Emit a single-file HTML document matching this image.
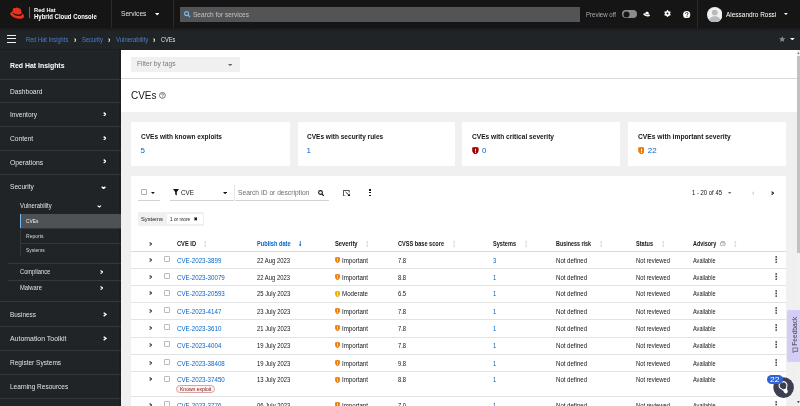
<!DOCTYPE html>
<html><head><meta charset="utf-8"><title>CVEs - Red Hat Insights</title>
<style>
html,body{margin:0;padding:0;width:800px;height:406px;overflow:hidden;background:#f0f0f0;font-family:"Liberation Sans", sans-serif;}
.r{position:absolute;display:block;}
.t{position:absolute;white-space:nowrap;line-height:12px;height:12px;}
</style></head><body><div id="pg" style="position:absolute;left:0;top:0;width:800px;height:406px;overflow:hidden;filter:blur(0.3px)">
<div class="r" style="left:0.00px;top:0.00px;width:800.00px;height:28.00px;background:#151515;"></div>
<svg class="r" style="left:9.00px;top:7.00px" width="16" height="12.2" viewBox="0 -1 16.5 13"><path d="M10.6 6.9c1.1 0 2.6-.2 2.6-1.5 0-.1 0-.2 0-.3l-.6-2.8C12.4 1.6 12.2 1.2 11.1.7 10.2.3 8.4-.4 7.9-.4 7.4-.4 7.2.3 6.7.3 6.1.3 5.7-.1 5.2-.1 4.7-.1 4.4.2 4.1 1.1c0 0-.8 2.2-.9 2.5 0 .1 0 .1 0 .2 0 .8 3.1 3.4 7.4 3.4zM13.5 5.9c.2.7.2.8.2.9 0 1.1-1.3 1.8-2.9 1.8-3.7 0-7-2.2-7-3.6 0-.2 0-.4.1-.6C2.6 4.5 1 4.7 1 6.2 1 8.6 6.8 11.6 11.3 11.6c3.5 0 4.4-1.6 4.4-2.8 0-1-.8-2.1-2.2-2.9z" fill="#e8321e"/></svg>
<div class="r" style="left:29.00px;top:7.10px;width:0.60px;height:11.40px;background:#6a6e73;"></div>
<div class="t" style="left:33.70px;top:4.30px;font-size:5.6px;color:#fff;font-weight:bold;transform:scaleX(1.0217);transform-origin:0 50%;">Red Hat</div>
<div class="t" style="left:33.70px;top:10.90px;font-size:6.6px;color:#fff;font-weight:bold;transform:scaleX(0.9063);transform-origin:0 50%;">Hybrid Cloud Console</div>
<div class="r" style="left:110.80px;top:0.00px;width:0.80px;height:28.00px;background:#2a2a2a;"></div>
<div class="t" style="left:121.30px;top:8.30px;font-size:7.2px;color:#e0e0e0;transform:scaleX(0.9215);transform-origin:0 50%;">Services</div>
<svg class="r" style="left:155.00px;top:13.00px" width="4.4" height="2.6" viewBox="0 0 4.4 2.6"><polygon points="0,0 4.4,0 2.2,2.6" fill="#fff"/></svg>
<div class="r" style="left:173.10px;top:0.00px;width:0.80px;height:28.00px;background:#2a2a2a;"></div>
<div class="r" style="left:180.00px;top:6.80px;width:399.80px;height:15.10px;background:#535456;"></div>
<svg class="r" style="left:184.00px;top:11.00px" width="6.5" height="6.5" viewBox="0 0 6.5 6.5"><circle cx="2.6" cy="2.6" r="2" fill="none" stroke="#73bcf7" stroke-width="1.1"/><line x1="4.1" y1="4.1" x2="6" y2="6" stroke="#73bcf7" stroke-width="1.3"/></svg>
<div class="t" style="left:193.20px;top:8.80px;font-size:7.0px;color:#c3c5c7;transform:scaleX(0.9346);transform-origin:0 50%;">Search for services</div>
<div class="t" style="left:585.90px;top:8.60px;font-size:6.8px;color:#a8abae;transform:scaleX(0.8955);transform-origin:0 50%;">Preview off</div>
<div class="r" style="left:622.00px;top:9.80px;width:15.00px;height:8.40px;background:#8a8d90;border-radius:5px"></div>
<svg class="r" style="left:622.80px;top:10.60px" width="7" height="7" viewBox="0 0 7 7"><circle cx="3.5" cy="3.5" r="3" fill="#151515"/></svg>
<svg class="r" style="left:643.20px;top:10.80px" width="7.6" height="6" viewBox="0 0 7.6 6"><g transform="rotate(12 3.8 3)"><path d="M1.9 3.4 C2.0 1.2 2.9 0.6 3.9 0.6 C4.9 0.6 5.7 1.2 5.9 3.4 Z" fill="#fff"/><ellipse cx="3.8" cy="3.9" rx="3.5" ry="1.3" fill="#fff"/><path d="M1.9 3.2 Q3.9 4.0 5.9 3.2" stroke="#151515" stroke-width="0.5" fill="none"/></g></svg>
<svg class="r" style="left:663.50px;top:10.40px" width="7" height="7" viewBox="0 0 7 7"><g fill="#fff"><rect x="2.8" y="0.1" width="1.4" height="6.8" transform="rotate(0 3.5 3.5)"/><rect x="2.8" y="0.1" width="1.4" height="6.8" transform="rotate(60 3.5 3.5)"/><rect x="2.8" y="0.1" width="1.4" height="6.8" transform="rotate(120 3.5 3.5)"/></g><circle cx="3.5" cy="3.5" r="2.6" fill="#fff"/><circle cx="3.5" cy="3.5" r="1.0" fill="#151515"/></svg>
<svg class="r" style="left:683.30px;top:10.60px" width="7.4" height="7.4" viewBox="0 0 7.4 7.4"><circle cx="3.7" cy="3.7" r="3.6" fill="#fff"/><path d="M2.4 2.9 C2.4 1.9 3.0 1.5 3.7 1.5 C4.5 1.5 5.0 2.0 5.0 2.7 C5.0 3.5 4.0 3.7 4.0 4.5" fill="none" stroke="#151515" stroke-width="0.9"/><rect x="3.55" y="5.2" width="0.9" height="0.9" fill="#151515"/></svg>
<div class="r" style="left:697.20px;top:0.00px;width:0.80px;height:28.00px;background:#2a2a2a;"></div>
<svg class="r" style="left:706.80px;top:6.80px" width="15.5" height="15.5" viewBox="0 0 15.5 15.5"><defs><clipPath id="av"><circle cx="7.75" cy="7.75" r="7.75"/></clipPath></defs><circle cx="7.75" cy="7.75" r="7.75" fill="#f0f0f0"/><g clip-path="url(#av)"><circle cx="7.75" cy="5.6" r="2.9" fill="#b8bbbe"/><ellipse cx="7.75" cy="13.8" rx="5.6" ry="4.6" fill="#b8bbbe"/></g></svg>
<div class="t" style="left:725.60px;top:8.50px;font-size:7.2px;color:#fff;transform:scaleX(0.8992);transform-origin:0 50%;">Alessandro Rossi</div>
<svg class="r" style="left:784.20px;top:13.10px" width="3.8" height="2.1" viewBox="0 0 3.8 2.1"><polygon points="0,0 3.8,0 1.9,2.1" fill="#fff"/></svg>
<div class="r" style="left:0.00px;top:28.00px;width:800.00px;height:21.50px;background:#212427;"></div>
<div class="r" style="left:0.00px;top:28.00px;width:800.00px;height:3.50px;background:linear-gradient(#18191b,#212427);"></div>
<div class="r" style="left:7.00px;top:34.80px;width:9.00px;height:1.40px;background:#f0f0f0;"></div>
<div class="r" style="left:7.00px;top:38.10px;width:9.00px;height:1.40px;background:#f0f0f0;"></div>
<div class="r" style="left:7.00px;top:41.50px;width:9.00px;height:1.40px;background:#f0f0f0;"></div>
<div class="t" style="left:26.30px;top:33.90px;font-size:6.5px;color:#4a7fc8;transform:scaleX(0.8791);transform-origin:0 50%;">Red Hat Insights</div>
<svg class="r" style="left:73.70px;top:37.50px" width="2.8" height="4.2" viewBox="0 0 2.8 4.2"><polyline points="0.55,0.55 2.14,2.10 0.55,3.65" fill="none" stroke="#f0f0f0" stroke-width="1.1"/></svg>
<div class="t" style="left:81.80px;top:33.90px;font-size:6.5px;color:#4a7fc8;transform:scaleX(0.8879);transform-origin:0 50%;">Security</div>
<svg class="r" style="left:107.70px;top:37.50px" width="2.8" height="4.2" viewBox="0 0 2.8 4.2"><polyline points="0.55,0.55 2.14,2.10 0.55,3.65" fill="none" stroke="#f0f0f0" stroke-width="1.1"/></svg>
<div class="t" style="left:115.50px;top:33.90px;font-size:6.5px;color:#4a7fc8;transform:scaleX(0.9183);transform-origin:0 50%;">Vulnerability</div>
<svg class="r" style="left:152.50px;top:37.50px" width="2.8" height="4.2" viewBox="0 0 2.8 4.2"><polyline points="0.55,0.55 2.14,2.10 0.55,3.65" fill="none" stroke="#f0f0f0" stroke-width="1.1"/></svg>
<div class="t" style="left:160.50px;top:33.90px;font-size:6.5px;color:#e0e0e0;transform:scaleX(0.8662);transform-origin:0 50%;">CVEs</div>
<svg class="r" style="left:779.30px;top:35.60px" width="6.5" height="6" viewBox="0 0 6.5 6"><polygon points="3.25,0 4.1,2.2 6.5,2.3 4.6,3.8 5.3,6 3.25,4.7 1.2,6 1.9,3.8 0,2.3 2.4,2.2" fill="#8a8d90"/></svg>
<svg class="r" style="left:790.40px;top:37.70px" width="4.7" height="2.4" viewBox="0 0 4.7 2.4"><polygon points="0,0 4.7,0 2.35,2.4" fill="#fff"/></svg>
<div class="r" style="left:0.00px;top:49.50px;width:121.00px;height:356.50px;background:#212427;"></div>
<div class="r" style="left:118.50px;top:49.50px;width:2.50px;height:356.50px;background:#1b1d21;"></div>
<div class="r" style="left:0.00px;top:48.80px;width:121.00px;height:1.00px;background:#1a1c1f;"></div>
<div class="t" style="left:9.60px;top:59.90px;font-size:7.9px;color:#fff;font-weight:bold;transform:scaleX(0.8753);transform-origin:0 50%;">Red Hat Insights</div>
<div class="r" style="left:0.00px;top:78.60px;width:121.00px;height:0.80px;background:#34373b;"></div>
<div class="t" style="left:9.60px;top:85.60px;font-size:7.6px;color:#e0e0e0;transform:scaleX(0.8720);transform-origin:0 50%;">Dashboard</div>
<div class="r" style="left:0.00px;top:101.90px;width:121.00px;height:0.80px;background:#34373b;"></div>
<div class="t" style="left:9.60px;top:109.40px;font-size:7.6px;color:#e0e0e0;transform:scaleX(0.8672);transform-origin:0 50%;">Inventory</div>
<svg class="r" style="left:102.60px;top:111.90px" width="3.8" height="4.6" viewBox="0 0 3.8 4.6"><polyline points="0.65,0.65 3.02,2.30 0.65,3.95" fill="none" stroke="#fff" stroke-width="1.3"/></svg>
<div class="r" style="left:0.00px;top:125.50px;width:121.00px;height:0.80px;background:#34373b;"></div>
<div class="t" style="left:9.60px;top:133.20px;font-size:7.6px;color:#e0e0e0;transform:scaleX(0.8719);transform-origin:0 50%;">Content</div>
<svg class="r" style="left:102.60px;top:135.70px" width="3.8" height="4.6" viewBox="0 0 3.8 4.6"><polyline points="0.65,0.65 3.02,2.30 0.65,3.95" fill="none" stroke="#fff" stroke-width="1.3"/></svg>
<div class="r" style="left:0.00px;top:149.50px;width:121.00px;height:0.80px;background:#34373b;"></div>
<div class="t" style="left:9.60px;top:156.90px;font-size:7.6px;color:#e0e0e0;transform:scaleX(0.8935);transform-origin:0 50%;">Operations</div>
<svg class="r" style="left:102.60px;top:159.40px" width="3.8" height="4.6" viewBox="0 0 3.8 4.6"><polyline points="0.65,0.65 3.02,2.30 0.65,3.95" fill="none" stroke="#fff" stroke-width="1.3"/></svg>
<div class="r" style="left:0.00px;top:173.50px;width:121.00px;height:0.80px;background:#34373b;"></div>
<div class="t" style="left:9.60px;top:181.10px;font-size:7.6px;color:#e0e0e0;transform:scaleX(0.8719);transform-origin:0 50%;">Security</div>
<svg class="r" style="left:101.00px;top:185.60px" width="5.2" height="3.4" viewBox="0 0 5.2 3.4"><polyline points="0.75,0.75 2.60,2.50 4.45,0.75" fill="none" stroke="#fff" stroke-width="1.5"/></svg>
<div class="t" style="left:19.60px;top:199.90px;font-size:6.7px;color:#e0e0e0;transform:scaleX(0.8732);transform-origin:0 50%;">Vulnerability</div>
<svg class="r" style="left:97.30px;top:205.30px" width="4.6" height="2.8" viewBox="0 0 4.6 2.8"><polyline points="0.60,0.60 2.30,2.08 4.00,0.60" fill="none" stroke="#fff" stroke-width="1.2"/></svg>
<div class="r" style="left:19.80px;top:213.80px;width:101.20px;height:14.60px;background:#4f5255;"></div>
<div class="r" style="left:19.80px;top:213.80px;width:1.60px;height:14.60px;background:#73bcf7;"></div>
<div class="r" style="left:19.80px;top:228.40px;width:0.80px;height:27.60px;background:#34373b;"></div>
<div class="t" style="left:26.30px;top:215.30px;font-size:5.6px;color:#f0f0f0;transform:scaleX(0.8594);transform-origin:0 50%;">CVEs</div>
<div class="r" style="left:20.60px;top:228.10px;width:100.40px;height:0.60px;background:#34373b;"></div>
<div class="t" style="left:26.30px;top:230.20px;font-size:5.6px;color:#d8d8d8;transform:scaleX(0.8982);transform-origin:0 50%;">Reports</div>
<div class="r" style="left:20.60px;top:243.00px;width:100.40px;height:0.60px;background:#34373b;"></div>
<div class="t" style="left:26.30px;top:244.40px;font-size:5.6px;color:#d8d8d8;transform:scaleX(0.8717);transform-origin:0 50%;">Systems</div>
<div class="r" style="left:8.00px;top:263.30px;width:113.00px;height:0.70px;background:#34373b;"></div>
<div class="t" style="left:19.60px;top:266.20px;font-size:6.7px;color:#e0e0e0;transform:scaleX(0.8581);transform-origin:0 50%;">Compliance</div>
<svg class="r" style="left:99.80px;top:269.60px" width="3.4" height="4.2" viewBox="0 0 3.4 4.2"><polyline points="0.60,0.60 2.68,2.10 0.60,3.60" fill="none" stroke="#fff" stroke-width="1.2"/></svg>
<div class="r" style="left:8.00px;top:279.60px;width:113.00px;height:0.70px;background:#34373b;"></div>
<div class="t" style="left:19.60px;top:282.40px;font-size:6.7px;color:#e0e0e0;transform:scaleX(0.8656);transform-origin:0 50%;">Malware</div>
<svg class="r" style="left:99.80px;top:285.80px" width="3.4" height="4.2" viewBox="0 0 3.4 4.2"><polyline points="0.60,0.60 2.68,2.10 0.60,3.60" fill="none" stroke="#fff" stroke-width="1.2"/></svg>
<div class="r" style="left:0.00px;top:301.40px;width:121.00px;height:0.80px;background:#34373b;"></div>
<div class="t" style="left:9.60px;top:308.90px;font-size:7.6px;color:#e0e0e0;transform:scaleX(0.8434);transform-origin:0 50%;">Business</div>
<svg class="r" style="left:102.80px;top:312.00px" width="3.8" height="4.8" viewBox="0 0 3.8 4.8"><polyline points="0.65,0.65 3.02,2.40 0.65,4.15" fill="none" stroke="#fff" stroke-width="1.3"/></svg>
<div class="r" style="left:0.00px;top:325.90px;width:121.00px;height:0.80px;background:#34373b;"></div>
<div class="t" style="left:9.60px;top:333.10px;font-size:7.6px;color:#e0e0e0;transform:scaleX(0.9124);transform-origin:0 50%;">Automation Toolkit</div>
<svg class="r" style="left:102.80px;top:336.20px" width="3.8" height="4.8" viewBox="0 0 3.8 4.8"><polyline points="0.65,0.65 3.02,2.40 0.65,4.15" fill="none" stroke="#fff" stroke-width="1.3"/></svg>
<div class="r" style="left:0.00px;top:349.90px;width:121.00px;height:0.80px;background:#34373b;"></div>
<div class="t" style="left:9.60px;top:357.10px;font-size:7.6px;color:#e0e0e0;transform:scaleX(0.8586);transform-origin:0 50%;">Register Systems</div>
<div class="r" style="left:0.00px;top:373.90px;width:121.00px;height:0.80px;background:#34373b;"></div>
<div class="t" style="left:9.60px;top:381.10px;font-size:7.6px;color:#e0e0e0;transform:scaleX(0.8563);transform-origin:0 50%;">Learning Resources</div>
<div class="r" style="left:0.00px;top:398.00px;width:121.00px;height:0.80px;background:#34373b;"></div>
<div class="r" style="left:121.00px;top:49.50px;width:676.00px;height:62.50px;background:#ffffff;"></div>
<div class="r" style="left:121.00px;top:112.00px;width:676.00px;height:294.00px;background:#f0f0f0;"></div>
<div class="r" style="left:131.00px;top:56.70px;width:109.00px;height:14.90px;background:#f0f0f0;"></div>
<div class="t" style="left:137.40px;top:58.20px;font-size:7.3px;color:#777b80;transform:scaleX(0.9215);transform-origin:0 50%;">Filter by tags</div>
<svg class="r" style="left:228.00px;top:63.70px" width="4.2" height="2.3" viewBox="0 0 4.2 2.3"><polygon points="0,0 4.2,0 2.1,2.3" fill="#6a6e73"/></svg>
<div class="r" style="left:121.00px;top:77.90px;width:676.00px;height:0.80px;background:#d9d9d9;"></div>
<div class="t" style="left:130.50px;top:89.20px;font-size:10.6px;color:#151515;transform:scaleX(0.9412);transform-origin:0 50%;">CVEs</div>
<svg class="r" style="left:159.10px;top:92.20px" width="6.8" height="6.8" viewBox="0 0 6.8 6.8"><circle cx="3.4" cy="3.4" r="2.9" fill="none" stroke="#4f5255" stroke-width="0.8"/><path d="M2.4 2.7 C2.4 2.0 2.9 1.7 3.4 1.7 C4.0 1.7 4.4 2.1 4.4 2.6 C4.4 3.3 3.6 3.4 3.6 4.1" fill="none" stroke="#4f5255" stroke-width="0.7"/><rect x="3.25" y="4.55" width="0.7" height="0.7" fill="#4f5255"/></svg>
<div class="r" style="left:130.60px;top:122.20px;width:159.30px;height:43.40px;background:#fff;"></div>
<div class="t" style="left:140.60px;top:130.90px;font-size:7.2px;color:#151515;font-weight:bold;transform:scaleX(0.9095);transform-origin:0 50%;">CVEs with known exploits</div>
<div class="t" style="left:140.60px;top:145.30px;font-size:8.0px;color:#0066cc;">5</div>
<div class="r" style="left:297.70px;top:122.20px;width:157.40px;height:43.40px;background:#fff;"></div>
<div class="t" style="left:306.50px;top:130.90px;font-size:7.2px;color:#151515;font-weight:bold;transform:scaleX(0.9083);transform-origin:0 50%;">CVEs with security rules</div>
<div class="t" style="left:306.50px;top:145.30px;font-size:8.0px;color:#0066cc;">1</div>
<div class="r" style="left:462.00px;top:122.20px;width:158.10px;height:43.40px;background:#fff;"></div>
<div class="t" style="left:472.00px;top:130.90px;font-size:7.2px;color:#151515;font-weight:bold;transform:scaleX(0.9162);transform-origin:0 50%;">CVEs with critical severity</div>
<svg class="r" style="left:471.80px;top:146.60px" width="6.8" height="7.5" viewBox="0 0 6.8 7.5"><path d="M0.2 0.6 L3.4 0 L6.6 0.6 L6.6 3.6 C6.6 5.6 5 6.9 3.4 7.5 C1.8 6.9 0.2 5.6 0.2 3.6 Z" fill="#a30000"/><rect x="3" y="1.7" width="0.9" height="2.8" fill="#fff"/><rect x="3" y="5.1" width="0.9" height="0.9" fill="#fff"/></svg>
<div class="t" style="left:482.00px;top:145.30px;font-size:8.0px;color:#0066cc;">0</div>
<div class="r" style="left:627.80px;top:122.20px;width:158.30px;height:43.40px;background:#fff;"></div>
<div class="t" style="left:637.60px;top:130.90px;font-size:7.2px;color:#151515;font-weight:bold;transform:scaleX(0.9311);transform-origin:0 50%;">CVEs with important severity</div>
<svg class="r" style="left:637.60px;top:146.60px" width="6.8" height="7.5" viewBox="0 0 6.8 7.5"><path d="M0.2 0.6 L3.4 0 L6.6 0.6 L6.6 3.6 C6.6 5.6 5 6.9 3.4 7.5 C1.8 6.9 0.2 5.6 0.2 3.6 Z" fill="#ec7a08"/><rect x="3" y="1.7" width="0.9" height="2.8" fill="#fff"/><rect x="3" y="5.1" width="0.9" height="0.9" fill="#fff"/></svg>
<div class="t" style="left:647.80px;top:145.30px;font-size:8.0px;color:#0066cc;">22</div>
<div class="r" style="left:130.70px;top:176.20px;width:655.40px;height:229.80px;background:#fff;"></div>
<svg class="r" style="left:141.00px;top:189.40px" width="6" height="6" viewBox="0 0 6 6"><rect x="0.4" y="0.4" width="5.2" height="5.2" rx="0.8" fill="#fff" stroke="#8a8d90" stroke-width="0.8"/></svg>
<svg class="r" style="left:151.20px;top:192.00px" width="3.8" height="2.1" viewBox="0 0 3.8 2.1"><polygon points="0,0 3.8,0 1.9,2.1" fill="#151515"/></svg>
<div class="r" style="left:137.70px;top:199.90px;width:22.10px;height:0.70px;background:#d2d2d2;"></div>
<svg class="r" style="left:172.70px;top:189.20px" width="6" height="6.5" viewBox="0 0 6 6.5"><path d="M0 0 H6 L3.8 2.9 V6.5 L2.2 5.6 V2.9 Z" fill="#151515"/></svg>
<div class="t" style="left:181.00px;top:186.70px;font-size:6.9px;color:#151515;transform:scaleX(0.9173);transform-origin:0 50%;">CVE</div>
<svg class="r" style="left:222.50px;top:191.90px" width="4.2" height="2.3" viewBox="0 0 4.2 2.3"><polygon points="0,0 4.2,0 2.1,2.3" fill="#151515"/></svg>
<div class="r" style="left:170.00px;top:199.90px;width:63.80px;height:0.70px;background:#d2d2d2;"></div>
<div class="r" style="left:234.20px;top:185.20px;width:0.60px;height:15.10px;background:#e6e6e6;"></div>
<div class="t" style="left:238.20px;top:186.90px;font-size:7.0px;color:#6a6e73;transform:scaleX(0.9495);transform-origin:0 50%;">Search ID or description</div>
<svg class="r" style="left:318.10px;top:190.00px" width="6.2" height="6.4" viewBox="0 0 6.2 6.4"><circle cx="2.5" cy="2.5" r="1.9" fill="none" stroke="#151515" stroke-width="1.1"/><line x1="3.9" y1="3.9" x2="5.8" y2="5.9" stroke="#151515" stroke-width="1.3"/></svg>
<div class="r" style="left:234.80px;top:199.90px;width:94.20px;height:0.70px;background:#d2d2d2;"></div>
<svg class="r" style="left:342.50px;top:189.60px" width="7.5" height="6.5" viewBox="0 0 7.5 6.5"><path d="M0.4 0.4 H6.2 V2.6 M0.4 0.4 V6.1 H2.6" fill="none" stroke="#151515" stroke-width="0.8"/><line x1="2.6" y1="2.0" x2="6.4" y2="5.6" stroke="#151515" stroke-width="0.9"/><polygon points="6.9,6.1 6.9,3.6 4.4,6.1" fill="#151515"/></svg>
<div class="r" style="left:368.80px;top:189.30px;width:1.80px;height:1.50px;background:#151515;"></div>
<div class="r" style="left:368.80px;top:191.90px;width:1.80px;height:1.50px;background:#151515;"></div>
<div class="r" style="left:368.80px;top:194.50px;width:1.80px;height:1.50px;background:#151515;"></div>
<div class="t" style="left:691.80px;top:186.60px;font-size:6.6px;color:#151515;transform:scaleX(0.8993);transform-origin:0 50%;">1 - 20 of 45</div>
<svg class="r" style="left:728.20px;top:191.90px" width="3.2" height="1.9" viewBox="0 0 3.2 1.9"><polygon points="0,0 3.2,0 1.6,1.9" fill="#6a6e73"/></svg>
<svg class="r" style="left:751.60px;top:190.60px" width="2.8" height="4.2" viewBox="0 0 2.8 4.2"><polyline points="2.25,0.55 0.66,2.10 2.25,3.65" fill="none" stroke="#d2d2d2" stroke-width="1.1"/></svg>
<svg class="r" style="left:771.30px;top:190.60px" width="3.2" height="4.2" viewBox="0 0 3.2 4.2"><polyline points="0.62,0.62 2.45,2.10 0.62,3.58" fill="none" stroke="#151515" stroke-width="1.25"/></svg>
<div class="r" style="left:138.20px;top:212.20px;width:66.00px;height:13.50px;background:#f0f0f0;border-radius:1.5px"></div>
<div class="t" style="left:140.60px;top:213.10px;font-size:6.2px;color:#151515;transform:scaleX(0.9269);transform-origin:0 50%;">Systems</div>
<div class="r" style="left:166.70px;top:214.30px;width:36.00px;height:9.50px;background:#fff;border-radius:1.5px"></div>
<div class="t" style="left:169.60px;top:213.10px;font-size:5.4px;color:#151515;transform:scaleX(0.8710);transform-origin:0 50%;">1 or more</div>
<svg class="r" style="left:193.60px;top:217.20px" width="3.8" height="3.8" viewBox="0 0 3.8 3.8"><line x1="0.5" y1="0.5" x2="3.3" y2="3.3" stroke="#151515" stroke-width="1.2"/><line x1="3.3" y1="0.5" x2="0.5" y2="3.3" stroke="#151515" stroke-width="1.2"/></svg>
<svg class="r" style="left:148.80px;top:241.50px" width="3.4" height="4.0" viewBox="0 0 3.4 4.0"><polyline points="0.60,0.60 2.68,2.00 0.60,3.40" fill="none" stroke="#3c3f42" stroke-width="1.2"/></svg>
<div class="t" style="left:176.60px;top:237.50px;font-size:6.5px;color:#151515;font-weight:bold;transform:scaleX(0.8767);transform-origin:0 50%;">CVE ID</div>
<svg class="r" style="left:204.00px;top:240.50px" width="2.4" height="6" viewBox="0 0 2.4 6"><line x1="1.2" y1="0.3" x2="1.2" y2="5.7" stroke="#c7c7c7" stroke-width="0.6"/><polyline points="0.3,1.3 1.2,0.3 2.1,1.3" fill="none" stroke="#c7c7c7" stroke-width="0.6"/><polyline points="0.3,4.7 1.2,5.7 2.1,4.7" fill="none" stroke="#c7c7c7" stroke-width="0.6"/></svg>
<div class="t" style="left:256.80px;top:237.50px;font-size:6.5px;color:#0066cc;font-weight:bold;transform:scaleX(0.8692);transform-origin:0 50%;">Publish date</div>
<svg class="r" style="left:298.80px;top:240.70px" width="2.6" height="5.6" viewBox="0 0 2.6 5.6"><line x1="1.3" y1="0" x2="1.3" y2="4.6" stroke="#0066cc" stroke-width="0.8"/><polygon points="0,3.6 2.6,3.6 1.3,5.6" fill="#0066cc"/></svg>
<div class="t" style="left:334.80px;top:237.50px;font-size:6.5px;color:#151515;font-weight:bold;transform:scaleX(0.8934);transform-origin:0 50%;">Severity</div>
<svg class="r" style="left:366.00px;top:240.50px" width="2.4" height="6" viewBox="0 0 2.4 6"><line x1="1.2" y1="0.3" x2="1.2" y2="5.7" stroke="#c7c7c7" stroke-width="0.6"/><polyline points="0.3,1.3 1.2,0.3 2.1,1.3" fill="none" stroke="#c7c7c7" stroke-width="0.6"/><polyline points="0.3,4.7 1.2,5.7 2.1,4.7" fill="none" stroke="#c7c7c7" stroke-width="0.6"/></svg>
<div class="t" style="left:397.80px;top:237.50px;font-size:6.5px;color:#151515;font-weight:bold;transform:scaleX(0.8601);transform-origin:0 50%;">CVSS base score</div>
<svg class="r" style="left:453.00px;top:240.50px" width="2.4" height="6" viewBox="0 0 2.4 6"><line x1="1.2" y1="0.3" x2="1.2" y2="5.7" stroke="#c7c7c7" stroke-width="0.6"/><polyline points="0.3,1.3 1.2,0.3 2.1,1.3" fill="none" stroke="#c7c7c7" stroke-width="0.6"/><polyline points="0.3,4.7 1.2,5.7 2.1,4.7" fill="none" stroke="#c7c7c7" stroke-width="0.6"/></svg>
<div class="t" style="left:492.80px;top:237.50px;font-size:6.5px;color:#151515;font-weight:bold;transform:scaleX(0.8598);transform-origin:0 50%;">Systems</div>
<svg class="r" style="left:524.60px;top:240.50px" width="2.4" height="6" viewBox="0 0 2.4 6"><line x1="1.2" y1="0.3" x2="1.2" y2="5.7" stroke="#c7c7c7" stroke-width="0.6"/><polyline points="0.3,1.3 1.2,0.3 2.1,1.3" fill="none" stroke="#c7c7c7" stroke-width="0.6"/><polyline points="0.3,4.7 1.2,5.7 2.1,4.7" fill="none" stroke="#c7c7c7" stroke-width="0.6"/></svg>
<div class="t" style="left:555.80px;top:237.50px;font-size:6.5px;color:#151515;font-weight:bold;transform:scaleX(0.8278);transform-origin:0 50%;">Business risk</div>
<svg class="r" style="left:600.00px;top:240.50px" width="2.4" height="6" viewBox="0 0 2.4 6"><line x1="1.2" y1="0.3" x2="1.2" y2="5.7" stroke="#c7c7c7" stroke-width="0.6"/><polyline points="0.3,1.3 1.2,0.3 2.1,1.3" fill="none" stroke="#c7c7c7" stroke-width="0.6"/><polyline points="0.3,4.7 1.2,5.7 2.1,4.7" fill="none" stroke="#c7c7c7" stroke-width="0.6"/></svg>
<div class="t" style="left:635.80px;top:237.50px;font-size:6.5px;color:#151515;font-weight:bold;transform:scaleX(0.8553);transform-origin:0 50%;">Status</div>
<svg class="r" style="left:662.00px;top:240.50px" width="2.4" height="6" viewBox="0 0 2.4 6"><line x1="1.2" y1="0.3" x2="1.2" y2="5.7" stroke="#c7c7c7" stroke-width="0.6"/><polyline points="0.3,1.3 1.2,0.3 2.1,1.3" fill="none" stroke="#c7c7c7" stroke-width="0.6"/><polyline points="0.3,4.7 1.2,5.7 2.1,4.7" fill="none" stroke="#c7c7c7" stroke-width="0.6"/></svg>
<div class="t" style="left:692.60px;top:237.50px;font-size:6.5px;color:#151515;font-weight:bold;transform:scaleX(0.8355);transform-origin:0 50%;">Advisory</div>
<svg class="r" style="left:720.20px;top:240.50px" width="5.6" height="5.6" viewBox="0 0 5.6 5.6"><circle cx="2.8" cy="2.8" r="2.4" fill="none" stroke="#6a6e73" stroke-width="0.6"/><path d="M2.0 2.2 C2.0 1.6 2.4 1.3 2.8 1.3 C3.3 1.3 3.6 1.7 3.6 2.1 C3.6 2.7 3.0 2.8 3.0 3.4" fill="none" stroke="#6a6e73" stroke-width="0.5"/><rect x="2.75" y="3.8" width="0.5" height="0.5" fill="#6a6e73"/></svg>
<svg class="r" style="left:734.20px;top:240.50px" width="2.4" height="6" viewBox="0 0 2.4 6"><line x1="1.2" y1="0.3" x2="1.2" y2="5.7" stroke="#c7c7c7" stroke-width="0.6"/><polyline points="0.3,1.3 1.2,0.3 2.1,1.3" fill="none" stroke="#c7c7c7" stroke-width="0.6"/><polyline points="0.3,4.7 1.2,5.7 2.1,4.7" fill="none" stroke="#c7c7c7" stroke-width="0.6"/></svg>
<div class="r" style="left:130.70px;top:251.20px;width:655.40px;height:0.70px;background:#d9d9d9;"></div>
<svg class="r" style="left:148.80px;top:257.70px" width="3.4" height="4.2" viewBox="0 0 3.4 4.2"><polyline points="0.60,0.60 2.68,2.10 0.60,3.60" fill="none" stroke="#3c3f42" stroke-width="1.2"/></svg>
<svg class="r" style="left:164.10px;top:255.90px" width="6" height="6" viewBox="0 0 6 6"><rect x="0.4" y="0.4" width="5.2" height="5.2" rx="0.8" fill="#fff" stroke="#9a9da0" stroke-width="0.8"/></svg>
<div class="t" style="left:176.60px;top:254.70px;font-size:6.8px;color:#0066cc;transform:scaleX(0.9099);transform-origin:0 50%;">CVE-2023-3899</div>
<div class="t" style="left:256.80px;top:254.70px;font-size:6.8px;color:#151515;transform:scaleX(0.8642);transform-origin:0 50%;">22 Aug 2023</div>
<svg class="r" style="left:335.30px;top:256.80px" width="5" height="6.2" viewBox="0 0 5 6.2"><path d="M0.1 0.5 L2.5 0 L4.9 0.5 L4.9 3 C4.9 4.6 3.7 5.6 2.5 6.2 C1.3 5.6 0.1 4.6 0.1 3 Z" fill="#ec7a08"/><rect x="2.1" y="1.4" width="0.8" height="2.2" fill="#fff"/><rect x="2.1" y="4.1" width="0.8" height="0.8" fill="#fff"/></svg>
<div class="t" style="left:341.80px;top:254.70px;font-size:6.8px;color:#151515;transform:scaleX(0.9053);transform-origin:0 50%;">Important</div>
<div class="t" style="left:397.80px;top:254.70px;font-size:6.8px;color:#151515;transform:scaleX(0.8559);transform-origin:0 50%;">7.8</div>
<div class="t" style="left:492.80px;top:254.70px;font-size:6.8px;color:#0066cc;transform:scaleX(0.8559);transform-origin:0 50%;">3</div>
<div class="t" style="left:555.80px;top:254.70px;font-size:6.8px;color:#151515;transform:scaleX(0.8917);transform-origin:0 50%;">Not defined</div>
<div class="t" style="left:635.80px;top:254.70px;font-size:6.8px;color:#151515;transform:scaleX(0.8570);transform-origin:0 50%;">Not reviewed</div>
<div class="t" style="left:692.60px;top:254.70px;font-size:6.8px;color:#151515;transform:scaleX(0.8191);transform-origin:0 50%;">Available</div>
<svg class="r" style="left:774.80px;top:255.90px" width="2.4" height="7" viewBox="0 0 2.4 7"><circle cx="1.2" cy="0.95" r="0.9" fill="#3c3f42"/><circle cx="1.2" cy="3.5" r="0.9" fill="#3c3f42"/><circle cx="1.2" cy="6.05" r="0.9" fill="#3c3f42"/></svg>
<div class="r" style="left:130.70px;top:267.95px;width:655.40px;height:0.70px;background:#e3e3e3;"></div>
<svg class="r" style="left:148.80px;top:274.50px" width="3.4" height="4.2" viewBox="0 0 3.4 4.2"><polyline points="0.60,0.60 2.68,2.10 0.60,3.60" fill="none" stroke="#3c3f42" stroke-width="1.2"/></svg>
<svg class="r" style="left:164.10px;top:272.70px" width="6" height="6" viewBox="0 0 6 6"><rect x="0.4" y="0.4" width="5.2" height="5.2" rx="0.8" fill="#fff" stroke="#9a9da0" stroke-width="0.8"/></svg>
<div class="t" style="left:176.60px;top:271.50px;font-size:6.8px;color:#0066cc;transform:scaleX(0.9099);transform-origin:0 50%;">CVE-2023-30079</div>
<div class="t" style="left:256.80px;top:271.50px;font-size:6.8px;color:#151515;transform:scaleX(0.8642);transform-origin:0 50%;">22 Aug 2023</div>
<svg class="r" style="left:335.30px;top:273.60px" width="5" height="6.2" viewBox="0 0 5 6.2"><path d="M0.1 0.5 L2.5 0 L4.9 0.5 L4.9 3 C4.9 4.6 3.7 5.6 2.5 6.2 C1.3 5.6 0.1 4.6 0.1 3 Z" fill="#ec7a08"/><rect x="2.1" y="1.4" width="0.8" height="2.2" fill="#fff"/><rect x="2.1" y="4.1" width="0.8" height="0.8" fill="#fff"/></svg>
<div class="t" style="left:341.80px;top:271.50px;font-size:6.8px;color:#151515;transform:scaleX(0.9053);transform-origin:0 50%;">Important</div>
<div class="t" style="left:397.80px;top:271.50px;font-size:6.8px;color:#151515;transform:scaleX(0.8559);transform-origin:0 50%;">8.8</div>
<div class="t" style="left:492.80px;top:271.50px;font-size:6.8px;color:#0066cc;transform:scaleX(0.8559);transform-origin:0 50%;">1</div>
<div class="t" style="left:555.80px;top:271.50px;font-size:6.8px;color:#151515;transform:scaleX(0.8917);transform-origin:0 50%;">Not defined</div>
<div class="t" style="left:635.80px;top:271.50px;font-size:6.8px;color:#151515;transform:scaleX(0.8570);transform-origin:0 50%;">Not reviewed</div>
<div class="t" style="left:692.60px;top:271.50px;font-size:6.8px;color:#151515;transform:scaleX(0.8191);transform-origin:0 50%;">Available</div>
<svg class="r" style="left:774.80px;top:272.70px" width="2.4" height="7" viewBox="0 0 2.4 7"><circle cx="1.2" cy="0.95" r="0.9" fill="#3c3f42"/><circle cx="1.2" cy="3.5" r="0.9" fill="#3c3f42"/><circle cx="1.2" cy="6.05" r="0.9" fill="#3c3f42"/></svg>
<div class="r" style="left:130.70px;top:284.85px;width:655.40px;height:0.70px;background:#e3e3e3;"></div>
<svg class="r" style="left:148.80px;top:291.40px" width="3.4" height="4.2" viewBox="0 0 3.4 4.2"><polyline points="0.60,0.60 2.68,2.10 0.60,3.60" fill="none" stroke="#3c3f42" stroke-width="1.2"/></svg>
<svg class="r" style="left:164.10px;top:289.60px" width="6" height="6" viewBox="0 0 6 6"><rect x="0.4" y="0.4" width="5.2" height="5.2" rx="0.8" fill="#fff" stroke="#9a9da0" stroke-width="0.8"/></svg>
<div class="t" style="left:176.60px;top:288.40px;font-size:6.8px;color:#0066cc;transform:scaleX(0.9099);transform-origin:0 50%;">CVE-2023-20593</div>
<div class="t" style="left:256.80px;top:288.40px;font-size:6.8px;color:#151515;transform:scaleX(0.8642);transform-origin:0 50%;">25 July 2023</div>
<svg class="r" style="left:335.30px;top:290.50px" width="5" height="6.2" viewBox="0 0 5 6.2"><path d="M0.1 0.5 L2.5 0 L4.9 0.5 L4.9 3 C4.9 4.6 3.7 5.6 2.5 6.2 C1.3 5.6 0.1 4.6 0.1 3 Z" fill="#f0ab00"/><rect x="2.1" y="1.4" width="0.8" height="2.2" fill="#fff"/><rect x="2.1" y="4.1" width="0.8" height="0.8" fill="#fff"/></svg>
<div class="t" style="left:341.80px;top:288.40px;font-size:6.8px;color:#151515;transform:scaleX(0.9053);transform-origin:0 50%;">Moderate</div>
<div class="t" style="left:397.80px;top:288.40px;font-size:6.8px;color:#151515;transform:scaleX(0.8559);transform-origin:0 50%;">6.5</div>
<div class="t" style="left:492.80px;top:288.40px;font-size:6.8px;color:#0066cc;transform:scaleX(0.8559);transform-origin:0 50%;">1</div>
<div class="t" style="left:555.80px;top:288.40px;font-size:6.8px;color:#151515;transform:scaleX(0.8917);transform-origin:0 50%;">Not defined</div>
<div class="t" style="left:635.80px;top:288.40px;font-size:6.8px;color:#151515;transform:scaleX(0.8570);transform-origin:0 50%;">Not reviewed</div>
<div class="t" style="left:692.60px;top:288.40px;font-size:6.8px;color:#151515;transform:scaleX(0.8191);transform-origin:0 50%;">Available</div>
<svg class="r" style="left:774.80px;top:289.60px" width="2.4" height="7" viewBox="0 0 2.4 7"><circle cx="1.2" cy="0.95" r="0.9" fill="#3c3f42"/><circle cx="1.2" cy="3.5" r="0.9" fill="#3c3f42"/><circle cx="1.2" cy="6.05" r="0.9" fill="#3c3f42"/></svg>
<div class="r" style="left:130.70px;top:301.95px;width:655.40px;height:0.70px;background:#e3e3e3;"></div>
<svg class="r" style="left:148.80px;top:308.50px" width="3.4" height="4.2" viewBox="0 0 3.4 4.2"><polyline points="0.60,0.60 2.68,2.10 0.60,3.60" fill="none" stroke="#3c3f42" stroke-width="1.2"/></svg>
<svg class="r" style="left:164.10px;top:306.70px" width="6" height="6" viewBox="0 0 6 6"><rect x="0.4" y="0.4" width="5.2" height="5.2" rx="0.8" fill="#fff" stroke="#9a9da0" stroke-width="0.8"/></svg>
<div class="t" style="left:176.60px;top:305.50px;font-size:6.8px;color:#0066cc;transform:scaleX(0.9099);transform-origin:0 50%;">CVE-2023-4147</div>
<div class="t" style="left:256.80px;top:305.50px;font-size:6.8px;color:#151515;transform:scaleX(0.8642);transform-origin:0 50%;">23 July 2023</div>
<svg class="r" style="left:335.30px;top:307.60px" width="5" height="6.2" viewBox="0 0 5 6.2"><path d="M0.1 0.5 L2.5 0 L4.9 0.5 L4.9 3 C4.9 4.6 3.7 5.6 2.5 6.2 C1.3 5.6 0.1 4.6 0.1 3 Z" fill="#ec7a08"/><rect x="2.1" y="1.4" width="0.8" height="2.2" fill="#fff"/><rect x="2.1" y="4.1" width="0.8" height="0.8" fill="#fff"/></svg>
<div class="t" style="left:341.80px;top:305.50px;font-size:6.8px;color:#151515;transform:scaleX(0.9053);transform-origin:0 50%;">Important</div>
<div class="t" style="left:397.80px;top:305.50px;font-size:6.8px;color:#151515;transform:scaleX(0.8559);transform-origin:0 50%;">7.8</div>
<div class="t" style="left:492.80px;top:305.50px;font-size:6.8px;color:#0066cc;transform:scaleX(0.8559);transform-origin:0 50%;">1</div>
<div class="t" style="left:555.80px;top:305.50px;font-size:6.8px;color:#151515;transform:scaleX(0.8917);transform-origin:0 50%;">Not defined</div>
<div class="t" style="left:635.80px;top:305.50px;font-size:6.8px;color:#151515;transform:scaleX(0.8570);transform-origin:0 50%;">Not reviewed</div>
<div class="t" style="left:692.60px;top:305.50px;font-size:6.8px;color:#151515;transform:scaleX(0.8191);transform-origin:0 50%;">Available</div>
<svg class="r" style="left:774.80px;top:306.70px" width="2.4" height="7" viewBox="0 0 2.4 7"><circle cx="1.2" cy="0.95" r="0.9" fill="#3c3f42"/><circle cx="1.2" cy="3.5" r="0.9" fill="#3c3f42"/><circle cx="1.2" cy="6.05" r="0.9" fill="#3c3f42"/></svg>
<div class="r" style="left:130.70px;top:319.05px;width:655.40px;height:0.70px;background:#e3e3e3;"></div>
<svg class="r" style="left:148.80px;top:325.60px" width="3.4" height="4.2" viewBox="0 0 3.4 4.2"><polyline points="0.60,0.60 2.68,2.10 0.60,3.60" fill="none" stroke="#3c3f42" stroke-width="1.2"/></svg>
<svg class="r" style="left:164.10px;top:323.80px" width="6" height="6" viewBox="0 0 6 6"><rect x="0.4" y="0.4" width="5.2" height="5.2" rx="0.8" fill="#fff" stroke="#9a9da0" stroke-width="0.8"/></svg>
<div class="t" style="left:176.60px;top:322.60px;font-size:6.8px;color:#0066cc;transform:scaleX(0.9099);transform-origin:0 50%;">CVE-2023-3610</div>
<div class="t" style="left:256.80px;top:322.60px;font-size:6.8px;color:#151515;transform:scaleX(0.8642);transform-origin:0 50%;">21 July 2023</div>
<svg class="r" style="left:335.30px;top:324.70px" width="5" height="6.2" viewBox="0 0 5 6.2"><path d="M0.1 0.5 L2.5 0 L4.9 0.5 L4.9 3 C4.9 4.6 3.7 5.6 2.5 6.2 C1.3 5.6 0.1 4.6 0.1 3 Z" fill="#ec7a08"/><rect x="2.1" y="1.4" width="0.8" height="2.2" fill="#fff"/><rect x="2.1" y="4.1" width="0.8" height="0.8" fill="#fff"/></svg>
<div class="t" style="left:341.80px;top:322.60px;font-size:6.8px;color:#151515;transform:scaleX(0.9053);transform-origin:0 50%;">Important</div>
<div class="t" style="left:397.80px;top:322.60px;font-size:6.8px;color:#151515;transform:scaleX(0.8559);transform-origin:0 50%;">7.8</div>
<div class="t" style="left:492.80px;top:322.60px;font-size:6.8px;color:#0066cc;transform:scaleX(0.8559);transform-origin:0 50%;">1</div>
<div class="t" style="left:555.80px;top:322.60px;font-size:6.8px;color:#151515;transform:scaleX(0.8917);transform-origin:0 50%;">Not defined</div>
<div class="t" style="left:635.80px;top:322.60px;font-size:6.8px;color:#151515;transform:scaleX(0.8570);transform-origin:0 50%;">Not reviewed</div>
<div class="t" style="left:692.60px;top:322.60px;font-size:6.8px;color:#151515;transform:scaleX(0.8191);transform-origin:0 50%;">Available</div>
<svg class="r" style="left:774.80px;top:323.80px" width="2.4" height="7" viewBox="0 0 2.4 7"><circle cx="1.2" cy="0.95" r="0.9" fill="#3c3f42"/><circle cx="1.2" cy="3.5" r="0.9" fill="#3c3f42"/><circle cx="1.2" cy="6.05" r="0.9" fill="#3c3f42"/></svg>
<div class="r" style="left:130.70px;top:336.55px;width:655.40px;height:0.70px;background:#e3e3e3;"></div>
<svg class="r" style="left:148.80px;top:343.10px" width="3.4" height="4.2" viewBox="0 0 3.4 4.2"><polyline points="0.60,0.60 2.68,2.10 0.60,3.60" fill="none" stroke="#3c3f42" stroke-width="1.2"/></svg>
<svg class="r" style="left:164.10px;top:341.30px" width="6" height="6" viewBox="0 0 6 6"><rect x="0.4" y="0.4" width="5.2" height="5.2" rx="0.8" fill="#fff" stroke="#9a9da0" stroke-width="0.8"/></svg>
<div class="t" style="left:176.60px;top:340.10px;font-size:6.8px;color:#0066cc;transform:scaleX(0.9099);transform-origin:0 50%;">CVE-2023-4004</div>
<div class="t" style="left:256.80px;top:340.10px;font-size:6.8px;color:#151515;transform:scaleX(0.8642);transform-origin:0 50%;">19 July 2023</div>
<svg class="r" style="left:335.30px;top:342.20px" width="5" height="6.2" viewBox="0 0 5 6.2"><path d="M0.1 0.5 L2.5 0 L4.9 0.5 L4.9 3 C4.9 4.6 3.7 5.6 2.5 6.2 C1.3 5.6 0.1 4.6 0.1 3 Z" fill="#ec7a08"/><rect x="2.1" y="1.4" width="0.8" height="2.2" fill="#fff"/><rect x="2.1" y="4.1" width="0.8" height="0.8" fill="#fff"/></svg>
<div class="t" style="left:341.80px;top:340.10px;font-size:6.8px;color:#151515;transform:scaleX(0.9053);transform-origin:0 50%;">Important</div>
<div class="t" style="left:397.80px;top:340.10px;font-size:6.8px;color:#151515;transform:scaleX(0.8559);transform-origin:0 50%;">7.8</div>
<div class="t" style="left:492.80px;top:340.10px;font-size:6.8px;color:#0066cc;transform:scaleX(0.8559);transform-origin:0 50%;">1</div>
<div class="t" style="left:555.80px;top:340.10px;font-size:6.8px;color:#151515;transform:scaleX(0.8917);transform-origin:0 50%;">Not defined</div>
<div class="t" style="left:635.80px;top:340.10px;font-size:6.8px;color:#151515;transform:scaleX(0.8570);transform-origin:0 50%;">Not reviewed</div>
<div class="t" style="left:692.60px;top:340.10px;font-size:6.8px;color:#151515;transform:scaleX(0.8191);transform-origin:0 50%;">Available</div>
<svg class="r" style="left:774.80px;top:341.30px" width="2.4" height="7" viewBox="0 0 2.4 7"><circle cx="1.2" cy="0.95" r="0.9" fill="#3c3f42"/><circle cx="1.2" cy="3.5" r="0.9" fill="#3c3f42"/><circle cx="1.2" cy="6.05" r="0.9" fill="#3c3f42"/></svg>
<div class="r" style="left:130.70px;top:353.95px;width:655.40px;height:0.70px;background:#e3e3e3;"></div>
<svg class="r" style="left:148.80px;top:360.50px" width="3.4" height="4.2" viewBox="0 0 3.4 4.2"><polyline points="0.60,0.60 2.68,2.10 0.60,3.60" fill="none" stroke="#3c3f42" stroke-width="1.2"/></svg>
<svg class="r" style="left:164.10px;top:358.70px" width="6" height="6" viewBox="0 0 6 6"><rect x="0.4" y="0.4" width="5.2" height="5.2" rx="0.8" fill="#fff" stroke="#9a9da0" stroke-width="0.8"/></svg>
<div class="t" style="left:176.60px;top:357.50px;font-size:6.8px;color:#0066cc;transform:scaleX(0.9099);transform-origin:0 50%;">CVE-2023-38408</div>
<div class="t" style="left:256.80px;top:357.50px;font-size:6.8px;color:#151515;transform:scaleX(0.8642);transform-origin:0 50%;">19 July 2023</div>
<svg class="r" style="left:335.30px;top:359.60px" width="5" height="6.2" viewBox="0 0 5 6.2"><path d="M0.1 0.5 L2.5 0 L4.9 0.5 L4.9 3 C4.9 4.6 3.7 5.6 2.5 6.2 C1.3 5.6 0.1 4.6 0.1 3 Z" fill="#ec7a08"/><rect x="2.1" y="1.4" width="0.8" height="2.2" fill="#fff"/><rect x="2.1" y="4.1" width="0.8" height="0.8" fill="#fff"/></svg>
<div class="t" style="left:341.80px;top:357.50px;font-size:6.8px;color:#151515;transform:scaleX(0.9053);transform-origin:0 50%;">Important</div>
<div class="t" style="left:397.80px;top:357.50px;font-size:6.8px;color:#151515;transform:scaleX(0.8559);transform-origin:0 50%;">9.8</div>
<div class="t" style="left:492.80px;top:357.50px;font-size:6.8px;color:#0066cc;transform:scaleX(0.8559);transform-origin:0 50%;">1</div>
<div class="t" style="left:555.80px;top:357.50px;font-size:6.8px;color:#151515;transform:scaleX(0.8917);transform-origin:0 50%;">Not defined</div>
<div class="t" style="left:635.80px;top:357.50px;font-size:6.8px;color:#151515;transform:scaleX(0.8570);transform-origin:0 50%;">Not reviewed</div>
<div class="t" style="left:692.60px;top:357.50px;font-size:6.8px;color:#151515;transform:scaleX(0.8191);transform-origin:0 50%;">Available</div>
<svg class="r" style="left:774.80px;top:358.70px" width="2.4" height="7" viewBox="0 0 2.4 7"><circle cx="1.2" cy="0.95" r="0.9" fill="#3c3f42"/><circle cx="1.2" cy="3.5" r="0.9" fill="#3c3f42"/><circle cx="1.2" cy="6.05" r="0.9" fill="#3c3f42"/></svg>
<div class="r" style="left:130.70px;top:370.85px;width:655.40px;height:0.70px;background:#e3e3e3;"></div>
<svg class="r" style="left:148.80px;top:377.40px" width="3.4" height="4.2" viewBox="0 0 3.4 4.2"><polyline points="0.60,0.60 2.68,2.10 0.60,3.60" fill="none" stroke="#3c3f42" stroke-width="1.2"/></svg>
<svg class="r" style="left:164.10px;top:375.60px" width="6" height="6" viewBox="0 0 6 6"><rect x="0.4" y="0.4" width="5.2" height="5.2" rx="0.8" fill="#fff" stroke="#9a9da0" stroke-width="0.8"/></svg>
<div class="t" style="left:176.60px;top:374.40px;font-size:6.8px;color:#0066cc;transform:scaleX(0.9099);transform-origin:0 50%;">CVE-2023-37450</div>
<div class="r" style="left:176.2px;top:385.1px;width:38.5px;height:7.7px;border:0.8px solid #d9a3a3;border-radius:3.9px;box-sizing:border-box;background:#fdf1f1"></div>
<div class="t" style="left:180.00px;top:383.00px;font-size:5.6px;color:#7d1007;transform:scaleX(0.8958);transform-origin:0 50%;">Known exploit</div>
<div class="t" style="left:256.80px;top:374.40px;font-size:6.8px;color:#151515;transform:scaleX(0.8642);transform-origin:0 50%;">13 July 2023</div>
<svg class="r" style="left:335.30px;top:376.50px" width="5" height="6.2" viewBox="0 0 5 6.2"><path d="M0.1 0.5 L2.5 0 L4.9 0.5 L4.9 3 C4.9 4.6 3.7 5.6 2.5 6.2 C1.3 5.6 0.1 4.6 0.1 3 Z" fill="#ec7a08"/><rect x="2.1" y="1.4" width="0.8" height="2.2" fill="#fff"/><rect x="2.1" y="4.1" width="0.8" height="0.8" fill="#fff"/></svg>
<div class="t" style="left:341.80px;top:374.40px;font-size:6.8px;color:#151515;transform:scaleX(0.9053);transform-origin:0 50%;">Important</div>
<div class="t" style="left:397.80px;top:374.40px;font-size:6.8px;color:#151515;transform:scaleX(0.8559);transform-origin:0 50%;">8.8</div>
<div class="t" style="left:492.80px;top:374.40px;font-size:6.8px;color:#0066cc;transform:scaleX(0.8559);transform-origin:0 50%;">1</div>
<div class="t" style="left:555.80px;top:374.40px;font-size:6.8px;color:#151515;transform:scaleX(0.8917);transform-origin:0 50%;">Not defined</div>
<div class="t" style="left:635.80px;top:374.40px;font-size:6.8px;color:#151515;transform:scaleX(0.8570);transform-origin:0 50%;">Not reviewed</div>
<div class="t" style="left:692.60px;top:374.40px;font-size:6.8px;color:#151515;transform:scaleX(0.8191);transform-origin:0 50%;">Available</div>
<svg class="r" style="left:774.80px;top:375.60px" width="2.4" height="7" viewBox="0 0 2.4 7"><circle cx="1.2" cy="0.95" r="0.9" fill="#3c3f42"/><circle cx="1.2" cy="3.5" r="0.9" fill="#3c3f42"/><circle cx="1.2" cy="6.05" r="0.9" fill="#3c3f42"/></svg>
<div class="r" style="left:130.70px;top:396.15px;width:655.40px;height:0.70px;background:#e3e3e3;"></div>
<svg class="r" style="left:148.80px;top:402.70px" width="3.4" height="4.2" viewBox="0 0 3.4 4.2"><polyline points="0.60,0.60 2.68,2.10 0.60,3.60" fill="none" stroke="#3c3f42" stroke-width="1.2"/></svg>
<svg class="r" style="left:164.10px;top:400.90px" width="6" height="6" viewBox="0 0 6 6"><rect x="0.4" y="0.4" width="5.2" height="5.2" rx="0.8" fill="#fff" stroke="#9a9da0" stroke-width="0.8"/></svg>
<div class="t" style="left:176.60px;top:399.70px;font-size:6.8px;color:#0066cc;transform:scaleX(0.9099);transform-origin:0 50%;">CVE-2023-3776</div>
<div class="t" style="left:256.80px;top:399.70px;font-size:6.8px;color:#151515;transform:scaleX(0.8642);transform-origin:0 50%;">06 July 2023</div>
<svg class="r" style="left:335.30px;top:401.80px" width="5" height="6.2" viewBox="0 0 5 6.2"><path d="M0.1 0.5 L2.5 0 L4.9 0.5 L4.9 3 C4.9 4.6 3.7 5.6 2.5 6.2 C1.3 5.6 0.1 4.6 0.1 3 Z" fill="#ec7a08"/><rect x="2.1" y="1.4" width="0.8" height="2.2" fill="#fff"/><rect x="2.1" y="4.1" width="0.8" height="0.8" fill="#fff"/></svg>
<div class="t" style="left:341.80px;top:399.70px;font-size:6.8px;color:#151515;transform:scaleX(0.9053);transform-origin:0 50%;">Important</div>
<div class="t" style="left:397.80px;top:399.70px;font-size:6.8px;color:#151515;transform:scaleX(0.8559);transform-origin:0 50%;">7.0</div>
<div class="t" style="left:492.80px;top:399.70px;font-size:6.8px;color:#0066cc;transform:scaleX(0.8559);transform-origin:0 50%;">1</div>
<div class="t" style="left:555.80px;top:399.70px;font-size:6.8px;color:#151515;transform:scaleX(0.8917);transform-origin:0 50%;">Not defined</div>
<div class="t" style="left:635.80px;top:399.70px;font-size:6.8px;color:#151515;transform:scaleX(0.8570);transform-origin:0 50%;">Not reviewed</div>
<div class="t" style="left:692.60px;top:399.70px;font-size:6.8px;color:#151515;transform:scaleX(0.8191);transform-origin:0 50%;">Available</div>
<svg class="r" style="left:774.80px;top:400.90px" width="2.4" height="7" viewBox="0 0 2.4 7"><circle cx="1.2" cy="0.95" r="0.9" fill="#3c3f42"/><circle cx="1.2" cy="3.5" r="0.9" fill="#3c3f42"/><circle cx="1.2" cy="6.05" r="0.9" fill="#3c3f42"/></svg>
<div class="r" style="left:130.70px;top:413.15px;width:655.40px;height:0.70px;background:#e3e3e3;"></div>
<div class="r" style="left:797.00px;top:49.50px;width:3.00px;height:356.50px;background:#f1f1f1;"></div>
<div class="r" style="left:797.00px;top:56.20px;width:3.00px;height:196.40px;background:#c1c1c1;"></div>
<svg class="r" style="left:797.20px;top:51.80px" width="2.8" height="2.4" viewBox="0 0 2.8 2.4"><polygon points="1.4,0 2.8,2.4 0,2.4" fill="#777"/></svg>
<svg class="r" style="left:797.20px;top:401.00px" width="2.8" height="2.4" viewBox="0 0 2.8 2.4"><polygon points="0,0 2.8,0 1.4,2.4" fill="#505050"/></svg>
<div class="r" style="left:787.20px;top:309.50px;width:12.80px;height:52.20px;background:#d5cdf6;border-radius:2px 0 0 2px"></div>
<div class="r" style="left:789.6px;top:309.0px;width:11px;height:52.2px;display:flex;align-items:center;justify-content:center"><div style="transform:rotate(-90deg);white-space:nowrap;font-size:6.6px;color:#3c3f42;line-height:8px;display:flex;align-items:center"><svg width="6" height="6" viewBox="0 0 6 6" style="margin-right:1.6px;transform:rotate(90deg)"><path d="M0.5 0.6 H5.5 V4 H2.2 L0.8 5.4 V4 H0.5 Z" fill="none" stroke="#3c3f42" stroke-width="0.7"/></svg>Feedback</div></div>
<svg class="r" style="left:773.20px;top:376.60px" width="21.4" height="21.4" viewBox="0 0 21.4 21.4"><circle cx="10.6" cy="10.6" r="10.3" fill="#3c3f52"/><g transform="rotate(-25 11 10.5)"><path d="M11 4.6 C13.5 4.6 15.0 6.3 15.0 8.4 C15.0 10.4 13.0 11.2 12.8 12.8 L9.2 12.8 C9.0 11.2 7.0 10.4 7.0 8.4 C7.0 6.3 8.5 4.6 11 4.6 Z" fill="none" stroke="#fff" stroke-width="1.1"/><path d="M9.0 12.3 H13.0 L13.0 14.8 C13.0 16.0 12.1 16.8 11 16.8 C9.9 16.8 9.0 16.0 9.0 14.8 Z" fill="#fff"/></g></svg>
<div class="r" style="left:766.80px;top:374.60px;width:16.00px;height:9.90px;background:#2f62d3;border-radius:5px"></div>
<div class="t" style="left:770.30px;top:373.70px;font-size:7.6px;color:#fff;transform:scaleX(1.1120);transform-origin:0 50%;">22</div>
</div></body></html>
